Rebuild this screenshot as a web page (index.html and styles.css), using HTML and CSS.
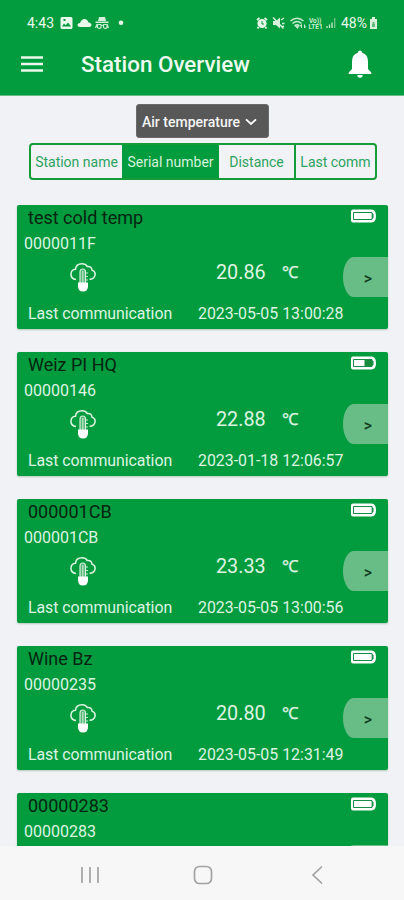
FILE: index.html
```
<!DOCTYPE html>
<html lang="en">
<head>
<meta charset="utf-8">
<title>Station Overview</title>
<link rel="stylesheet" href="styles.css">
</head>
<body>
<svg class="defs" width="0" height="0">
  <symbol id="cloud" viewBox="0 0 26 30">
    <path d="M6 17.500C2.500 17 .8 14.500 1 12c.2-2.700 2-4.600 4.500-4.700C5.800 3.600 8.500 1.800 12 1.800c2.500 0 4.200.8 5.300 2.700 2.700-.5 4.500 1 4.700 3.600 2.500.7 3.400 2.600 3 5-.4 2.500-2.200 4.100-5.500 4.100" fill="none" stroke="#dff5e4" stroke-width="1.500"/>
    <path d="M10 21V10c0-4 5.500-4 5.500 0v11" fill="#56b878" stroke="#d5f0dc" stroke-width="1.200"/>
    <path d="M12.800 9v12M16 11h2M16 14.500h2M16 18h2" stroke="#c5e9cf" stroke-width="1.200"/>
    <path d="M8 20.500h10v3.500q0 5.500-5 5.500t-5-5.500z" fill="#fff"/>
  </symbol>
  <symbol id="battery" viewBox="0 0 27 14">
    <path d="M3 .5h18.500q4.500 0 4.500 6.500t-4.500 6.500H3q-2 0-2-2v-9q0-2 2-2z" fill="#fff"/>
    <path d="M3.500 3.500H22v1.500h1v4h-1v1.500H3.500z" fill="#fff" stroke="#168c46" stroke-width="1"/>
    <path d="M22.300 5v4" stroke="#168c46" stroke-width="1.300"/>
  </symbol>
</svg>
<header class="appbar">
  <div class="status">
    <span class="clock">4:43</span>
    <svg class="notif" width="70" height="16" viewBox="0 0 70 16">
      <path fill="#e8f8eb" fill-rule="evenodd" d="M2 2h9q1.500 0 1.500 1.500v9Q12.500 14 11 14H2Q.5 14 .5 12.500v-9Q.5 2 2 2zm0 9.500h9L8 7.500l-2.300 2.800L4 8.500zM3.500 4v2h2V4z"/>
      <path fill="#e8f8eb" d="M20 12q-2.500 0-2.500-2 0-1.800 2.500-2 1.500-4 4.500-4t4 3.500q3 .5 3 2.500t-2.500 2z"/>
      <path fill="#d3f0da" d="M39 2h6l1 4h-8zM35.500 6.500h13V8h-13z"/>
      <path fill="none" stroke="#c5eacf" stroke-width="1.200" d="M37.500 9.500h3.500v3q-2 2-3.500 0zM43.500 9.500H47v3q-2 2-3.500 0zM41 10.500h2.500M37 9l-1.500 4M47 9l1.500 4"/>
      <circle cx="61" cy="7.800" r="2.300" fill="#e8f8eb"/>
    </svg>
    <svg class="signals" width="82" height="16" viewBox="0 0 82 16">
      <circle cx="6" cy="8.500" r="4.600" fill="#e4f7e8"/>
      <path d="M1 5 3.500 3M11 5 8.500 3M2.500 12 1.500 13.500M9.500 12l1 1.500" stroke="#d8f2de" stroke-width="2"/>
      <path d="M6 6v3h2" stroke="#0a9b3d" fill="none"/>
      <path d="M17 6h3l4-3.500v11L20 10h-3z" fill="#d8f2de"/>
      <path d="m17 2.500 10.500 11M25 5l3-2M26 8.500h2.500M26 12l2-1" stroke="#d8f2de" stroke-width="1.500"/>
      <path d="M34.500 6q6.500-5.500 13 0M36.500 8.500q4.500-4 9 0M38.500 10.800q2.500-2 5 0" fill="none" stroke="#c8ebd0" stroke-width="1.500"/>
      <path d="m39.500 11 2 2.500 1-2.500zM45.500 13V9.500l-1.300 1.300M48.500 9.500V13l1.200-1.300" fill="#c8ebd0" stroke="#c8ebd0"/>
      <text x="53" y="7.500" class="lte">Vo))</text>
      <text x="52.500" y="14" class="lte">LTE1</text>
      <path d="M71 13v-2M73.500 13V9.500M76 13V7.500" stroke="#c8ebd0" stroke-width="1.300"/>
      <path d="M78.700 13V3" stroke="#76c78e" stroke-width="1.300"/>
    </svg>
    <span class="percent">48%</span>
    <svg width="9" height="14" viewBox="0 0 9 14"><path d="M3 1h3v2h2v10H1V3h2z" fill="#d8f2de"/><path d="M3 8h3v3H3zM3.500 8V6h2v2" fill="#5ebc7b"/></svg>
  </div>
  <div class="toolbar">
    <svg class="menu" width="22" height="16" viewBox="0 0 22 16"><path d="M0 1.500h22M0 8h22M0 14.500h22" stroke="#e8f8eb" stroke-width="2.400"/></svg>
    <h1>Station Overview</h1>
    <svg class="bell" width="24" height="28" viewBox="0 0 24 28"><path fill="#fff" d="M12 .5q1.800 0 2.200 2.300Q20 4.500 20 11.500v7.500l3.300 3.500V24H.7v-1.500L4 19v-7.500Q4 4.500 9.800 2.800 10.200.5 12 .5zM9.300 25h5.400q0 2.700-2.700 2.700T9.300 25z"/></svg>
  </div>
</header>
<main>
  <button class="select"><span>Air temperature</span><svg width="12" height="8" viewBox="0 0 12 8"><path d="m1 1.300 5 4.700 5-4.700" fill="none" stroke="#fff" stroke-width="1.800"/></svg></button>
  <nav class="tabs">
    <span class="tab t1">Station name</span>
    <span class="tab t2 active">Serial number</span>
    <span class="tab t3">Distance</span>
    <span class="tab t4">Last comm</span>
  </nav>
  <section class="list">
    <article class="card">
      <div class="head"><h2>test cold temp</h2><svg class="batt"><use href="#battery"/></svg></div>
      <div class="serial">0000011F</div>
      <div class="reading"><svg class="cloud"><use href="#cloud"/></svg><span class="value">20.86</span><span class="unit">℃</span><span class="go">&gt;</span></div>
      <div class="last"><span class="label">Last communication</span><time>2023-05-05 13:00:28</time></div>
    </article>
    <article class="card">
      <div class="head"><h2>Weiz PI HQ</h2><svg class="batt" viewBox="0 0 27 14"><use href="#battery"/><path d="M14.500 4H22v6h-7.500z" fill="#168c3c"/></svg></div>
      <div class="serial">00000146</div>
      <div class="reading"><svg class="cloud"><use href="#cloud"/></svg><span class="value">22.88</span><span class="unit">℃</span><span class="go">&gt;</span></div>
      <div class="last"><span class="label">Last communication</span><time>2023-01-18 12:06:57</time></div>
    </article>
    <article class="card">
      <div class="head"><h2>000001CB</h2><svg class="batt"><use href="#battery"/></svg></div>
      <div class="serial">000001CB</div>
      <div class="reading"><svg class="cloud"><use href="#cloud"/></svg><span class="value">23.33</span><span class="unit">℃</span><span class="go">&gt;</span></div>
      <div class="last"><span class="label">Last communication</span><time>2023-05-05 13:00:56</time></div>
    </article>
    <article class="card">
      <div class="head"><h2>Wine Bz</h2><svg class="batt"><use href="#battery"/></svg></div>
      <div class="serial">00000235</div>
      <div class="reading"><svg class="cloud"><use href="#cloud"/></svg><span class="value">20.80</span><span class="unit">℃</span><span class="go">&gt;</span></div>
      <div class="last"><span class="label">Last communication</span><time>2023-05-05 12:31:49</time></div>
    </article>
    <article class="card cut">
      <div class="head"><h2>00000283</h2><svg class="batt"><use href="#battery"/></svg></div>
      <div class="serial">00000283</div>
      <div class="reading"><span class="go"></span></div>
    </article>
  </section>
</main>
<footer class="navbar">
  <svg width="20" height="18" viewBox="0 0 20 18"><path d="M2 1v16M10 1v16M18 1v16" stroke="#b0b0b0" stroke-width="2"/></svg>
  <svg width="20" height="20" viewBox="0 0 20 20"><rect x="1.500" y="1.500" width="17" height="17" rx="5" fill="none" stroke="#a2a2a2" stroke-width="1.700"/></svg>
  <svg class="back" width="12" height="20" viewBox="0 0 12 20"><path d="M11 1.500 2 10l9 8.500" fill="none" stroke="#a2a2a2" stroke-width="1.700"/></svg>
</footer>
</body>
</html>
```
FILE: styles.css
```
* { box-sizing: border-box; }
body {
  margin: 0;
  height: 900px;
  overflow: hidden;
  display: flex;
  flex-direction: column;
  background: #f1f2f5;
  font-family: Roboto, sans-serif;
}
svg { display: block; flex: none; }
.defs { position: absolute; }
h1, h2 { margin: 0; }
.appbar { height: 96px; flex: none; background: #029b3d; border-bottom: 1px solid #5fc284; color: #e8f8eb; }
.status { display: flex; align-items: center; height: 31px; padding: 15px 0 0 27px; }
.clock { width: 33px; font-size: 14px; line-height: 16px; }
.signals { margin-left: 126px; }
.percent { width: 28px; margin-left: 3px; font-size: 14px; line-height: 16px; }
.lte { font-size: 6.500px; font-weight: 700; fill: #c8ebd0; }
.toolbar { display: flex; align-items: center; height: 65px; padding: 0 32px 0 21px; }
.toolbar h1 { margin-left: 38px; flex: 1; font-size: 22.400px; font-weight: 500; line-height: 30px; color: #eefaf0; }
main { height: 750px; flex: none; overflow: hidden; }
.select {
  display: flex;
  align-items: center;
  gap: 5px;
  width: 133px;
  height: 34px;
  margin: 8px 0 0 136px;
  padding: 1px 0 0 5px;
  border: 1px solid #6a6a6a;
  border-radius: 3px;
  background: #585858;
  color: #f5f5f5;
  font: 500 14px/20px Roboto, sans-serif;
  white-space: nowrap;
}
.tabs {
  display: flex;
  width: 348px;
  height: 37px;
  margin: 5px 0 0 29px;
  border: 2px solid #149c38;
  border-radius: 4px;
  overflow: hidden;
}
.tab { display: flex; align-items: center; justify-content: center; color: #2ba35f; font-size: 14px; white-space: nowrap; }
.t1 { width: 91px; }
.t2 { width: 97px; }
.t3 { width: 77px; border-right: 2px solid #149c38; }
.t4 { flex: 1; }
.active { background: #029b3d; color: #d5f2dc; }
.list { display: flex; flex-direction: column; gap: 23px; padding: 25px 16px 0 17px; }
.card { height: 124px; flex: none; overflow: hidden; border-radius: 2px; background: #029b3d; color: #def4e3; box-shadow: 0 1px 2px #b3cbbb; }
.head { display: flex; height: 26px; padding: 4px 11px 0 11px; justify-content: space-between; }
.head h2 { font-size: 18px; font-weight: 400; line-height: 18px; color: #052511; }
.batt { width: 27px; height: 14px; }
.serial { height: 26px; padding-left: 7px; font-size: 16px; line-height: 26px; }
.reading { display: flex; height: 40px; padding-left: 53px; }
.cloud { width: 26px; height: 30px; margin-top: 5px; }
.value { width: 66px; margin-left: 120px; font-size: 19.800px; line-height: 32px; }
.unit { width: 61px; font-size: 16.500px; line-height: 32px; -webkit-text-stroke: .3px #def4e3; }
.go {
  width: 45px;
  height: 40px;
  margin-left: auto;
  padding: 2px 0 0 5px;
  border-radius: 11px 0 0 11px / 20px 0 0 20px;
  background: #68bd87;
  color: #123d22;
  font-size: 16px;
  font-weight: 500;
  line-height: 40px;
  text-align: center;
}
.last { display: flex; height: 32px; padding-left: 11px; font-size: 15.900px; line-height: 34px; white-space: nowrap; }
.label { width: 170px; letter-spacing: -.05px; }
.navbar { display: flex; align-items: center; flex: 1; gap: 93px; padding: 3px 0 0 80px; background: #f7f7f7; }
.back { margin-left: 5px; }
```
